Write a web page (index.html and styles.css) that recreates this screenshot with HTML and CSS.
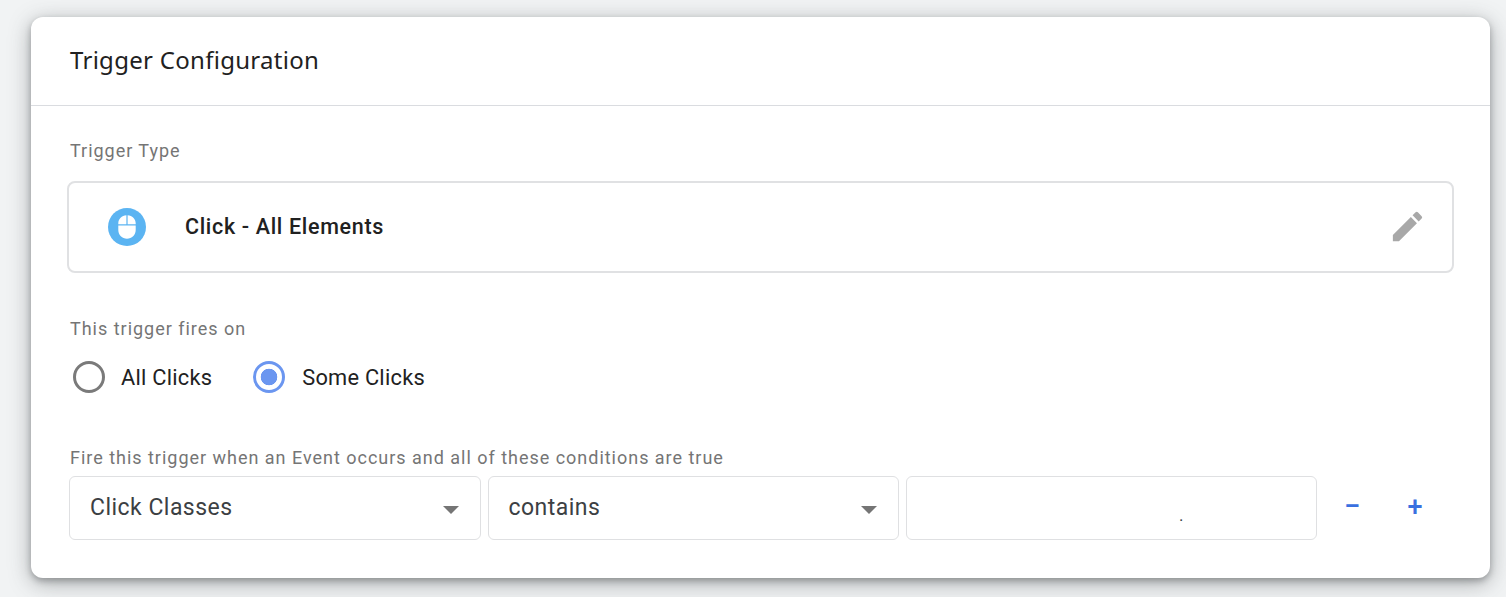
FILE: index.html
```html
<!DOCTYPE html>
<html lang="en">
<head>
<meta charset="utf-8">
<title>Trigger Configuration</title>
<link rel="stylesheet" href="styles.css">
</head>
<body>
<section class="card">
  <header class="card-header"><h1 class="card-title">Trigger Configuration</h1></header>
  <div class="card-body">
    <div class="label label-type">Trigger Type</div>
    <div class="type-box">
      <svg class="mouse-icon" width="38" height="38" viewBox="0 0 38 38" aria-hidden="true">
        <circle cx="19" cy="19" r="19" fill="#5bb4f2"/>
        <path fill="#fff" d="M18.4 7.3v9h-8.1v-1c0-4.3 3.5-7.8 8.1-8zM19.6 7.3c4.6.2 8.1 3.7 8.1 8v1h-8.1zM10.3 17.6h17.4v4.4c0 4.9-3.9 8.7-8.7 8.7s-8.7-3.8-8.7-8.7z"/>
      </svg>
      <span class="type-name">Click - All Elements</span>
      <svg class="edit-icon" width="39" height="39" viewBox="0 0 24 24" aria-hidden="true">
        <path fill="#a8a8a8" d="M3 17.25V21h3.75L17.81 9.94l-3.75-3.75L3 17.25zM20.71 7.04a1 1 0 0 0 0-1.41l-2.34-2.34a1 1 0 0 0-1.41 0l-1.83 1.83 3.75 3.75 1.83-1.83z"/>
      </svg>
    </div>
    <div class="label label-fires">This trigger fires on</div>
    <div class="radios">
      <div class="radio-item"><span class="radio"></span><span class="radio-text">All Clicks</span></div>
      <div class="radio-item"><span class="radio radio-on"></span><span class="radio-text radio-text-on">Some Clicks</span></div>
    </div>
    <div class="label label-cond">Fire this trigger when an Event occurs and all of these conditions are true</div>
    <div class="cond-row">
      <div class="field"><span>Click Classes</span><span class="caret"></span></div>
      <div class="field"><span>contains</span><span class="caret"></span></div>
      <div class="field field-value"><span class="dot">.</span></div>
      <div class="actions"><span class="action minus">–</span><span class="action plus">+</span></div>
    </div>
  </div>
</section>
</body>
</html>
```

FILE: styles.css
```css
* { box-sizing: border-box; }
html, body { height: 100%; }
body {
  margin: 0;
  padding: 17px 16px 0 31px;
  background: #f1f3f4;
  overflow: hidden;
  font-family: Roboto, "Liberation Sans", sans-serif;
  color: #212121;
}
.card {
  height: 561px;
  background: #fff;
  border-radius: 12px;
  box-shadow: 0 5px 22px rgba(60, 64, 67, .4), 0 3px 6px rgba(60, 64, 67, .35);
}
.card-header {
  height: 89px;
  border-bottom: 1px solid #dadce0;
  padding: 0 39px 4px;
  display: flex;
  align-items: center;
}
.card-title {
  margin: 0;
  font-family: "Noto Sans", sans-serif;
  font-size: 24px;
  font-weight: 400;
  letter-spacing: .29px;
  color: #212121;
}
.card-body { padding: 0 37px; }
.label {
  font-size: 18px;
  line-height: 20px;
  letter-spacing: .98px;
  color: #757575;
  padding-left: 2px;
}
.label-type { margin-top: 35px; }
.type-box {
  margin: 20px -1px 0;
  height: 92px;
  border: 2px solid #e0e1e3;
  border-radius: 8px;
  display: flex;
  align-items: center;
  padding: 0 25px 2px 39px;
}
.mouse-icon { flex: none; margin-top: 2px; }
.type-name {
  margin-left: 39px;
  font-size: 21.5px;
  font-weight: 500;
  letter-spacing: .67px;
  flex: 1;
}
.label-fires { margin-top: 46px; }
.radios {
  margin-top: 22px;
  display: flex;
  padding-left: 5px;
  gap: 41px;
}
.radio-item { display: flex; align-items: center; gap: 16px; height: 32px; }
.radio {
  width: 32px;
  height: 32px;
  border: 3px solid #7a7a7a;
  border-radius: 50%;
  display: block;
  flex: none;
}
.radio-on {
  border-color: #6b96f0;
  background: radial-gradient(circle, #6b96f0 0 8px, #fff 8.6px);
}
.radio-text { font-size: 21.8px; letter-spacing: .25px; color: #212121; }
.radio-text-on { margin-left: 1px; }
.label-cond { margin-top: 55px; }
.cond-row {
  margin-top: 8px;
  display: flex;
  gap: 7px;
  padding-left: 1px;
}
.field {
  width: 411.5px;
  height: 64px;
  border: 1px solid #dfe0e2;
  border-radius: 6px;
  display: flex;
  align-items: center;
  justify-content: space-between;
  padding: 0 21px 2px 20px;
  font-size: 23px;
  letter-spacing: .47px;
  color: #3c4043;
}
.caret {
  width: 0;
  height: 0;
  border-left: 8px solid transparent;
  border-right: 8px solid transparent;
  border-top: 8px solid #757575;
  margin-top: 5px;
}
.field-value { width: 411px; align-items: flex-start; padding: 27px 0 0 272px; }
.dot { font-size: 17px; line-height: 22px; }
.actions { display: flex; padding-left: 18px; gap: 43px; align-items: center; color: #3a70e0; }
.action { font-size: 27px; font-weight: 500; width: 20px; text-align: center; }
.minus { margin-top: -4px; font-weight: 700; font-size: 24px; }
.plus { margin-top: -2px; }
```
